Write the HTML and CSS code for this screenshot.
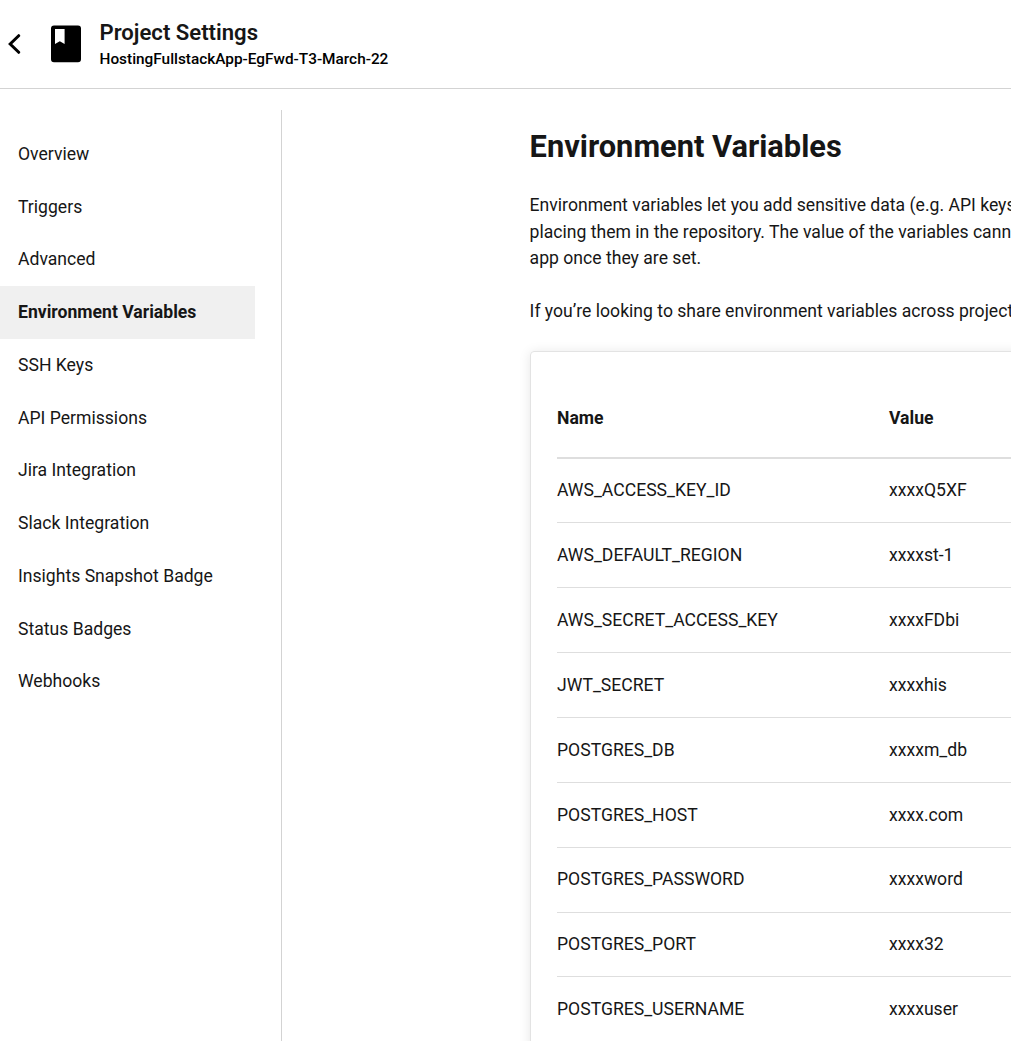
FILE: index.html
```html
<!DOCTYPE html>
<html lang="en">
<head>
<meta charset="utf-8">
<title>Project Settings</title>
<link rel="stylesheet" href="styles.css">
</head>
<body>
<header class="header">
  <svg class="back" viewBox="0 0 14 20" aria-hidden="true"><path d="M10.700 1.700 2.200 10l8.500 8.300" fill="none" stroke="currentColor" stroke-width="3" stroke-linecap="round"/></svg>
  <svg class="book" viewBox="0 0 30 38" aria-hidden="true"><path fill-rule="evenodd" d="M3 .5h24a3 3 0 0 1 3 3v30.800a3 3 0 0 1-3 3H3a3 3 0 0 1-3-3V3.500a3 3 0 0 1 3-3ZM4 4v15l4.800-2.700 4.800 2.700V4Z" fill="currentColor"/></svg>
  <div class="heading">
    <h1 class="heading-title">Project Settings</h1>
    <p class="heading-sub">HostingFullstackApp-EgFwd-T3-March-22</p>
  </div>
</header>
<div class="layout">
  <nav class="sidebar">
    <a class="item">Overview</a>
    <a class="item">Triggers</a>
    <a class="item">Advanced</a>
    <a class="item active">Environment Variables</a>
    <a class="item">SSH Keys</a>
    <a class="item">API Permissions</a>
    <a class="item">Jira Integration</a>
    <a class="item">Slack Integration</a>
    <a class="item">Insights Snapshot Badge</a>
    <a class="item">Status Badges</a>
    <a class="item">Webhooks</a>
  </nav>
  <main class="content">
    <h2 class="title">Environment Variables</h2>
    <p class="text">Environment variables let you add sensitive data (e.g. API keys)<br>placing them in the repository. The value of the variables cannot<br>app once they are set.</p>
    <p class="text">If you’re looking to share environment variables across projects,</p>
    <section class="card">
      <div class="row head"><span>Name</span><span>Value</span></div>
      <div class="row"><span>AWS_ACCESS_KEY_ID</span><span>xxxxQ5XF</span></div>
      <div class="row"><span>AWS_DEFAULT_REGION</span><span>xxxxst-1</span></div>
      <div class="row"><span>AWS_SECRET_ACCESS_KEY</span><span>xxxxFDbi</span></div>
      <div class="row"><span>JWT_SECRET</span><span>xxxxhis</span></div>
      <div class="row"><span>POSTGRES_DB</span><span>xxxxm_db</span></div>
      <div class="row"><span>POSTGRES_HOST</span><span>xxxx.com</span></div>
      <div class="row"><span>POSTGRES_PASSWORD</span><span>xxxxword</span></div>
      <div class="row"><span>POSTGRES_PORT</span><span>xxxx32</span></div>
      <div class="row"><span>POSTGRES_USERNAME</span><span>xxxxuser</span></div>
    </section>
  </main>
</div>
</body>
</html>
```
FILE: styles.css
```css
* { box-sizing: border-box; }
body {
  margin: 0;
  height: 1041px;
  overflow: hidden;
  background: #fff;
  color: #161616;
  font: 17.6px/26.4px Roboto, sans-serif;
}
h1, h2, p { margin: 0; }
.header {
  display: flex;
  height: 89px;
  padding: 0 8px;
  align-items: center;
  border-bottom: 1px solid #d3d3d3;
}
.back { width: 14px; height: 20px; margin-right: 29px; color: #000; }
.book { width: 30px; height: 38px; margin-right: 18.5px; color: #000; }
.heading { padding-top: 2px; }
.heading-title { margin-bottom: 2px; font-size: 22.1px; line-height: 26px; font-weight: 600; }
.heading-sub { color: #000; font-size: 15.37px; line-height: 24px; font-weight: 500; }
.layout { display: flex; height: 952px; padding-top: 21px; }
.sidebar {
  flex: none;
  width: 282px;
  padding: 17.7px 26px 0 0;
  border-right: 1px solid #d3d3d3;
}
.item {
  display: flex;
  height: 52.75px;
  padding-left: 18px;
  align-items: center;
}
.active { background: #f0f0f0; font-weight: 700; }
.content { flex: 1; min-width: 0; padding: 17px 0 0 247.6px; }
.title { font-size: 30.8px; line-height: 40px; font-weight: 700; margin-bottom: 25.2px; }
.text { margin-bottom: 26.4px; white-space: nowrap; }
.card {
  width: 760px;
  height: 700px;
  padding: 26px 26.4px;
  border: 1px solid #e3e3e3;
  border-radius: 4px;
  box-shadow: 0 1px 12px rgba(0, 0, 0, .1);
}
.row {
  display: grid;
  grid-template-columns: 332px 1fr;
  align-items: center;
  height: 64.85px;
  border-bottom: 1px solid #dedede;
}
.head { height: 81px; padding-top: 2.5px; border-bottom: 2px solid #dedede; font-weight: 700; }
```
